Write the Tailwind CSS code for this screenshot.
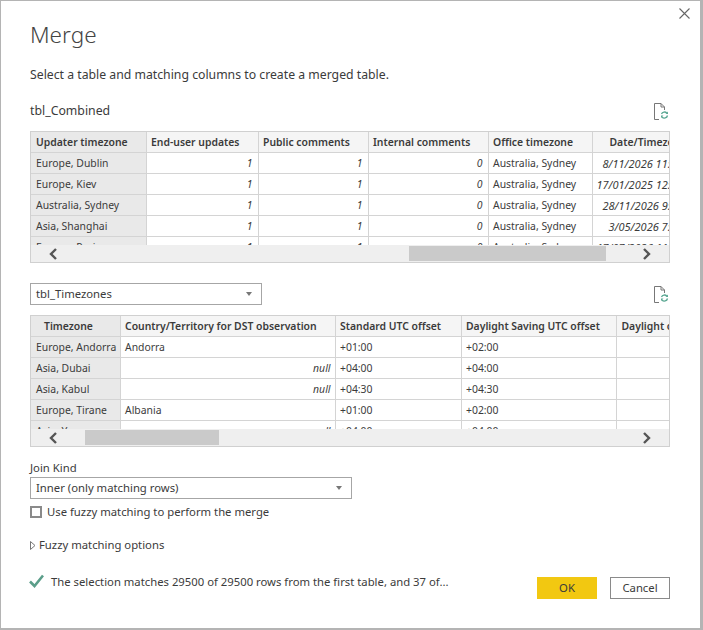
<!DOCTYPE html>
<html lang="en">
<head>
<meta charset="UTF-8">
<title>Merge</title>
<script src="https://cdn.jsdelivr.net/npm/@tailwindcss/browser@4"></script>
</head>
<body class="bg-white">
<div class="relative w-[703px] h-[630px] overflow-hidden bg-[#b4b4b4] pt-[1px] font-['Noto_Sans','Open_Sans',sans-serif] text-[#3b3b3b]">
  <!-- dialog -->
  <div class="relative w-[699px] h-[627px] ml-[1px] bg-white pl-[29px] pr-[30px]">
    <button class="absolute right-[10px] top-[7px] w-[11px] h-[11px]">
      <svg viewBox="0 0 11 11" class="w-[11px] h-[11px]"><path d="M0.5 0.5 L10.5 10.5 M10.5 0.5 L0.5 10.5" stroke="#666" stroke-width="1.1" fill="none"/></svg>
    </button>

    <h1 class="pt-[19px] text-[22.5px] leading-[30px] font-light text-[#444]">Merge</h1>
    <p class="mt-[16px] text-[12.25px] leading-[18px]">Select a table and matching columns to create a merged table.</p>

    <div class="mt-[15px] flex items-center justify-between h-[24px]">
      <span class="text-[12.3px] pt-[1px]">tbl_Combined</span>
      <svg viewBox="0 0 15 17" class="w-[15px] h-[17px] mr-[1px]">
        <path d="M0.5 0.5 H7 L10.5 4 V7 M7 0.5 V4 H10.5 M0.5 0.5 V16.5 H5" stroke="#777" fill="none"/>
        <path d="M7.5 11 A3.2 3.2 0 0 1 12.8 10 M13.5 12.5 A3.2 3.2 0 0 1 8 14" stroke="#5ba893" stroke-width="1.3" fill="none"/>
        <path d="M11.5 11 H14 V8.5 Z M9.5 12.5 H7 V15 Z" fill="#5ba893"/>
      </svg>
    </div>

    <!-- first table -->
    <div class="mt-[8px] w-[640px] border border-[#d0d0d0]">
      <div class="h-[113px] overflow-hidden">
        <table class="w-[700px] table-fixed border-collapse text-[10.4px] leading-[17px] [&_td]:pt-[2px] [&_th]:pt-[2px]">
          <thead>
            <tr class="h-[20px] bg-[#f5f5f5]">
              <th class="w-[115px] bg-[#e9e9e9] border-r border-b border-[#d4d4d4] pl-[5px] text-left font-semibold">Updater timezone</th>
              <th class="w-[112px] border-r border-b border-[#d4d4d4] pl-[4.5px] text-left font-semibold">End-user updates</th>
              <th class="w-[110px] border-r border-b border-[#d4d4d4] pl-[4.5px] text-left font-semibold">Public comments</th>
              <th class="w-[120px] border-r border-b border-[#d4d4d4] pl-[4.5px] text-left font-semibold">Internal comments</th>
              <th class="w-[104px] border-r border-b border-[#d4d4d4] pl-[4.5px] text-left font-semibold">Office timezone</th>
              <th class="w-[139px] border-b border-[#d4d4d4] pl-[17px] text-left font-semibold whitespace-nowrap">Date/Timezone</th>
            </tr>
          </thead>
          <tbody>
            <tr class="h-[21px]">
              <td class="bg-[#e9e9e9] border-r border-b border-[#d4d4d4] pl-[5px]">Europe, Dublin</td>
              <td class="border-r border-b border-[#d4d4d4] pr-[5px] text-right italic">1</td>
              <td class="border-r border-b border-[#d4d4d4] pr-[5px] text-right italic">1</td>
              <td class="border-r border-b border-[#d4d4d4] pr-[5px] text-right italic">0</td>
              <td class="border-r border-b border-[#d4d4d4] pl-[4.5px]">Australia, Sydney</td>
              <td class="border-b border-[#d4d4d4] pl-[10px] italic text-[11px] whitespace-nowrap">8/11/2026 11:04</td>
            </tr>
            <tr class="h-[21px]">
              <td class="bg-[#e9e9e9] border-r border-b border-[#d4d4d4] pl-[5px]">Europe, Kiev</td>
              <td class="border-r border-b border-[#d4d4d4] pr-[5px] text-right italic">1</td>
              <td class="border-r border-b border-[#d4d4d4] pr-[5px] text-right italic">1</td>
              <td class="border-r border-b border-[#d4d4d4] pr-[5px] text-right italic">0</td>
              <td class="border-r border-b border-[#d4d4d4] pl-[4.5px]">Australia, Sydney</td>
              <td class="border-b border-[#d4d4d4] pl-[4px] italic text-[11px] whitespace-nowrap">17/01/2025 12:30</td>
            </tr>
            <tr class="h-[21px]">
              <td class="bg-[#e9e9e9] border-r border-b border-[#d4d4d4] pl-[5px]">Australia, Sydney</td>
              <td class="border-r border-b border-[#d4d4d4] pr-[5px] text-right italic">1</td>
              <td class="border-r border-b border-[#d4d4d4] pr-[5px] text-right italic">1</td>
              <td class="border-r border-b border-[#d4d4d4] pr-[5px] text-right italic">0</td>
              <td class="border-r border-b border-[#d4d4d4] pl-[4.5px]">Australia, Sydney</td>
              <td class="border-b border-[#d4d4d4] pl-[10px] italic text-[11px] whitespace-nowrap">28/11/2026 9:15</td>
            </tr>
            <tr class="h-[21px]">
              <td class="bg-[#e9e9e9] border-r border-b border-[#d4d4d4] pl-[5px]">Asia, Shanghai</td>
              <td class="border-r border-b border-[#d4d4d4] pr-[5px] text-right italic">1</td>
              <td class="border-r border-b border-[#d4d4d4] pr-[5px] text-right italic">1</td>
              <td class="border-r border-b border-[#d4d4d4] pr-[5px] text-right italic">0</td>
              <td class="border-r border-b border-[#d4d4d4] pl-[4.5px]">Australia, Sydney</td>
              <td class="border-b border-[#d4d4d4] pl-[16px] italic text-[11px] whitespace-nowrap">3/05/2026 7:42</td>
            </tr>
            <tr class="h-[21px]">
              <td class="bg-[#e9e9e9] border-r border-b border-[#d4d4d4] pl-[5px]">Europe, Paris</td>
              <td class="border-r border-b border-[#d4d4d4] pr-[5px] text-right italic">1</td>
              <td class="border-r border-b border-[#d4d4d4] pr-[5px] text-right italic">1</td>
              <td class="border-r border-b border-[#d4d4d4] pr-[5px] text-right italic">0</td>
              <td class="border-r border-b border-[#d4d4d4] pl-[4.5px]">Australia, Sydney</td>
              <td class="border-b border-[#d4d4d4] pl-[4px] italic text-[11px] whitespace-nowrap">17/07/2026 11:20</td>
            </tr>
          </tbody>
        </table>
      </div>
      <div class="h-[17px] bg-[#efefef] flex items-center pl-[17px] pr-[17px]">
        <svg viewBox="0 0 10 12" class="w-[10px] h-[12px]"><path d="M8 1 L3 6 L8 11" stroke="#555" stroke-width="2.4" fill="none"/></svg>
        <div class="ml-[351px] w-[197px] h-[15px] bg-[#cacaca]"></div>
        <svg viewBox="0 0 10 12" class="ml-auto w-[10px] h-[12px]"><path d="M2 1 L7 6 L2 11" stroke="#555" stroke-width="2.4" fill="none"/></svg>
      </div>
    </div>

    <!-- second table selector -->
    <div class="mt-[20px] flex items-center justify-between">
      <div class="w-[232px] h-[22px] border border-[#a6a6a6] flex items-center justify-between pl-[5px] pr-[9px] text-[11.3px]">
        <span class="pt-[1px]">tbl_Timezones</span>
        <span class="w-0 h-0 border-x-[3px] border-x-transparent border-t-[4px] border-t-[#777]"></span>
      </div>
      <svg viewBox="0 0 15 17" class="w-[15px] h-[17px] mr-[1px]">
        <path d="M0.5 0.5 H7 L10.5 4 V7 M7 0.5 V4 H10.5 M0.5 0.5 V16.5 H5" stroke="#777" fill="none"/>
        <path d="M7.5 11 A3.2 3.2 0 0 1 12.8 10 M13.5 12.5 A3.2 3.2 0 0 1 8 14" stroke="#5ba893" stroke-width="1.3" fill="none"/>
        <path d="M11.5 11 H14 V8.5 Z M9.5 12.5 H7 V15 Z" fill="#5ba893"/>
      </svg>
    </div>

    <!-- second table -->
    <div class="mt-[10px] w-[640px] border border-[#d0d0d0]">
      <div class="h-[113px] overflow-hidden">
        <table class="w-[700px] table-fixed border-collapse text-[10.4px] leading-[17px] [&_td]:pt-[2px] [&_th]:pt-[2px]">
          <thead>
            <tr class="h-[20px] bg-[#f5f5f5]">
              <th class="w-[89px] bg-[#e9e9e9] border-r border-b border-[#d4d4d4] pl-[13px] text-left font-semibold">Timezone</th>
              <th class="w-[215px] border-r border-b border-[#d4d4d4] pl-[4.5px] text-left font-semibold whitespace-nowrap">Country/Territory for DST observation</th>
              <th class="w-[126px] border-r border-b border-[#d4d4d4] pl-[4.5px] text-left font-semibold">Standard UTC offset</th>
              <th class="w-[155px] border-r border-b border-[#d4d4d4] pl-[4.5px] text-left font-semibold">Daylight Saving UTC offset</th>
              <th class="w-[115px] border-b border-[#d4d4d4] pl-[5px] text-left font-semibold whitespace-nowrap">Daylight offset</th>
            </tr>
          </thead>
          <tbody>
            <tr class="h-[21px]">
              <td class="bg-[#e9e9e9] border-r border-b border-[#d4d4d4] pl-[5px] whitespace-nowrap">Europe, Andorra</td>
              <td class="border-r border-b border-[#d4d4d4] pl-[4.5px]">Andorra</td>
              <td class="border-r border-b border-[#d4d4d4] pl-[4.5px]">+01:00</td>
              <td class="border-r border-b border-[#d4d4d4] pl-[4.5px]">+02:00</td>
              <td class="border-b border-[#d4d4d4]"></td>
            </tr>
            <tr class="h-[21px]">
              <td class="bg-[#e9e9e9] border-r border-b border-[#d4d4d4] pl-[5px]">Asia, Dubai</td>
              <td class="border-r border-b border-[#d4d4d4] pr-[4px] text-right italic">null</td>
              <td class="border-r border-b border-[#d4d4d4] pl-[4.5px]">+04:00</td>
              <td class="border-r border-b border-[#d4d4d4] pl-[4.5px]">+04:00</td>
              <td class="border-b border-[#d4d4d4]"></td>
            </tr>
            <tr class="h-[21px]">
              <td class="bg-[#e9e9e9] border-r border-b border-[#d4d4d4] pl-[5px]">Asia, Kabul</td>
              <td class="border-r border-b border-[#d4d4d4] pr-[4px] text-right italic">null</td>
              <td class="border-r border-b border-[#d4d4d4] pl-[4.5px]">+04:30</td>
              <td class="border-r border-b border-[#d4d4d4] pl-[4.5px]">+04:30</td>
              <td class="border-b border-[#d4d4d4]"></td>
            </tr>
            <tr class="h-[21px]">
              <td class="bg-[#e9e9e9] border-r border-b border-[#d4d4d4] pl-[5px]">Europe, Tirane</td>
              <td class="border-r border-b border-[#d4d4d4] pl-[4.5px]">Albania</td>
              <td class="border-r border-b border-[#d4d4d4] pl-[4.5px]">+01:00</td>
              <td class="border-r border-b border-[#d4d4d4] pl-[4.5px]">+02:00</td>
              <td class="border-b border-[#d4d4d4]"></td>
            </tr>
            <tr class="h-[21px]">
              <td class="bg-[#e9e9e9] border-r border-b border-[#d4d4d4] pl-[5px]">Asia, Yerevan</td>
              <td class="border-r border-b border-[#d4d4d4] pr-[4px] text-right italic">null</td>
              <td class="border-r border-b border-[#d4d4d4] pl-[4.5px]">+04:00</td>
              <td class="border-r border-b border-[#d4d4d4] pl-[4.5px]">+04:00</td>
              <td class="border-b border-[#d4d4d4]"></td>
            </tr>
          </tbody>
        </table>
      </div>
      <div class="h-[17px] bg-[#efefef] flex items-center pl-[17px] pr-[17px]">
        <svg viewBox="0 0 10 12" class="w-[10px] h-[12px]"><path d="M8 1 L3 6 L8 11" stroke="#555" stroke-width="2.4" fill="none"/></svg>
        <div class="ml-[27px] w-[134px] h-[15px] bg-[#cacaca]"></div>
        <svg viewBox="0 0 10 12" class="ml-auto w-[10px] h-[12px]"><path d="M2 1 L7 6 L2 11" stroke="#555" stroke-width="2.4" fill="none"/></svg>
      </div>
    </div>

    <!-- join kind -->
    <div class="mt-[13px] text-[11.3px] leading-[16px]">Join Kind</div>
    <div class="mt-[1px] w-[322px] h-[22px] border border-[#a6a6a6] flex items-center justify-between pl-[5px] pr-[9px] text-[11.3px]">
      <span class="pt-[1px]">Inner (only matching rows)</span>
      <span class="w-0 h-0 border-x-[3px] border-x-transparent border-t-[4px] border-t-[#777]"></span>
    </div>
    <label class="mt-[5px] flex items-center h-[16px] text-[11.3px]">
      <span class="w-[12px] h-[12px] border-2 border-[#8a8a8a]"></span>
      <span class="ml-[5px]">Use fuzzy matching to perform the merge</span>
    </label>
    <div class="mt-[17px] flex items-center h-[16px] text-[11.3px]">
      <svg viewBox="0 0 6 9" class="w-[6px] h-[9px]"><path d="M0.5 0.5 L5 4.5 L0.5 8.5 Z" stroke="#777" fill="none"/></svg>
      <span class="ml-[3px]">Fuzzy matching options</span>
    </div>

    <!-- footer -->
    <div class="mt-[20px] flex items-start">
      <svg viewBox="0 0 15 14" class="mt-[1px] -ml-[1px] w-[15px] h-[14px]"><path d="M1 7.5 L5.5 12 L14 1.5" stroke="#5b9e8a" stroke-width="2.6" fill="none"/></svg>
      <span class="ml-[7px] text-[11.3px] leading-[18px] whitespace-nowrap">The selection matches 29500 of 29500 rows from the first table, and 37 of...</span>
      <div class="ml-auto mt-[4px] flex gap-[13px]">
        <button class="w-[60px] h-[22px] bg-[#f2c811] text-[11.3px]">OK</button>
        <button class="w-[60px] h-[22px] border border-[#8a8a8a] text-[11.3px]">Cancel</button>
      </div>
    </div>
  </div>
</div>
</body>
</html>
